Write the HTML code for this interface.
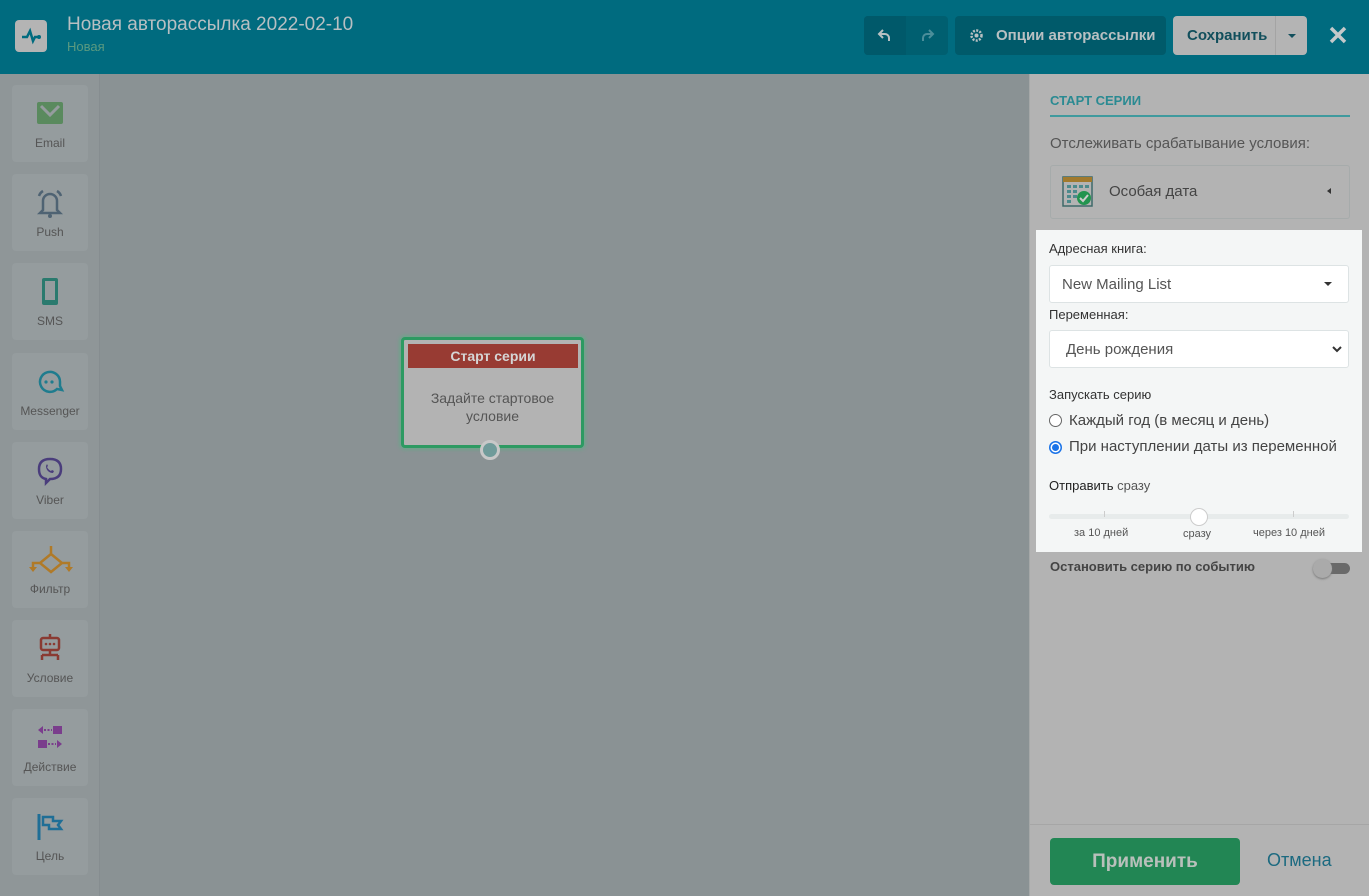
<!DOCTYPE html>
<html><head><meta charset="utf-8"><style>
*{box-sizing:border-box;margin:0;padding:0}
body{width:1369px;height:896px;overflow:hidden;font-family:"Liberation Sans",sans-serif;background:#8a9294;position:relative}
.hdr{position:absolute;left:0;top:0;width:1369px;height:74px;background:#006b7f}
.logo{position:absolute;left:15px;top:20px;width:32px;height:32px;background:#b4b4b4;border-radius:4px}
.title{position:absolute;left:67px;top:14px;font-size:19px;color:#b8bfc2}
.sub{position:absolute;left:67px;top:39px;font-size:13px;color:#5a9a80}
.btn{position:absolute;top:16px;height:39px;border-radius:4px}
.side{position:absolute;left:0;top:74px;width:100px;height:822px;background:#8f9698;border-right:1px solid #868d90}
.tile{position:absolute;left:12px;width:76px;height:77px;background:#959c9e;border-radius:4px;text-align:center;font-size:12px;color:#555}
.tile svg{position:absolute;left:23px;top:14px}
.tile span{position:absolute;left:0;right:0;top:51px}
.rp{position:absolute;left:1029px;top:74px;width:340px;height:822px;background:#b3b3b3;border-left:1px solid #a5a8a8}
.hl{position:absolute;left:1036px;top:230px;width:326px;height:322px;background:#f4f6f6}
.inp{position:absolute;left:13px;width:300px;height:38px;background:#fff;border:1px solid #dde3e4;border-radius:3px;font-size:15px;color:#555}
</style></head><body>
<div class="hdr">
<div class="logo"><svg width="32" height="32"><path d="M7 17h5l3-6 3 10 2-4h4" stroke="#006b7f" stroke-width="2.5" fill="none"/><circle cx="24" cy="17" r="2" fill="#006b7f"/></svg></div>
<div class="title">Новая авторассылка 2022-02-10</div>
<div class="sub">Новая</div>
<div class="btn" style="left:864px;width:84px;background:#005f70"><div style="position:absolute;left:0;top:0;width:42px;height:39px;background:#00596a;border-radius:4px 0 0 4px"></div>
<svg style="position:absolute;left:13px;top:11px" width="16" height="16"><path d="M6 3L2 7l4 4M2 7h6a4 4 0 0 1 4 4v3" stroke="#b8c0c2" stroke-width="2" fill="none"/></svg>
<svg style="position:absolute;left:55px;top:11px" width="16" height="16"><path d="M10 3l4 4-4 4M14 7H8a4 4 0 0 0-4 4v3" stroke="#4b8e9a" stroke-width="2" fill="none"/></svg></div>
<div class="btn" style="left:955px;width:211px;background:#005a6a;color:#b8c0c2;font-weight:bold;font-size:15px;line-height:39px;padding-left:41px">Опции авторассылки
<svg style="position:absolute;left:14px;top:12px" width="15" height="15"><circle cx="7.5" cy="7.5" r="5" stroke="#b8c0c2" stroke-width="2.5" fill="none" stroke-dasharray="2 1.3"/><circle cx="7.5" cy="7.5" r="2" fill="#b8c0c2"/></svg></div>
<div class="btn" style="left:1173px;width:134px;background:#b4b4b4;color:#124f5c;font-weight:bold;font-size:15px;line-height:39px;padding-left:14px">Сохранить
<div style="position:absolute;left:102px;top:0;width:1px;height:39px;background:#a4a4a4"></div>
<div style="position:absolute;left:115px;top:18px;border:4px solid transparent;border-top:4px solid #124f5c"></div></div>
<svg style="position:absolute;left:1328px;top:25px" width="20" height="20"><path d="M3 3l14 14M17 3L3 17" stroke="#c4c9ca" stroke-width="3.5"/></svg>
</div>
<div class="side">
<div class="tile" style="top:11px"><svg width="30" height="30"><rect x="2" y="3" width="26" height="22" rx="2" fill="#5a8a5e"/><path d="M6 7l9 9 9-9" stroke="#959c9e" stroke-width="3" fill="none"/></svg><span>Email</span></div>
<div class="tile" style="top:100px"><svg width="30" height="30"><path d="M8 22V13a7 7 0 0 1 14 0v9l3 3H5z" stroke="#4f6373" stroke-width="2.5" fill="none"/><circle cx="15" cy="28" r="2" fill="#4f6373"/><path d="M4 8a9 9 0 0 1 4-5M26 8a9 9 0 0 0-4-5" stroke="#4f6373" stroke-width="2.5" fill="none"/></svg><span>Push</span></div>
<div class="tile" style="top:189px"><svg width="30" height="30"><rect x="7" y="1" width="16" height="27" rx="2" fill="#2a7a6e"/><rect x="10" y="4" width="10" height="19" fill="#959c9e"/></svg><span>SMS</span></div>
<div class="tile" style="top:279px"><svg width="30" height="30"><path d="M22 22a10 10 0 1 1 3-7v4l2 4z" stroke="#1f7c8e" stroke-width="2.5" fill="none"/><circle cx="11" cy="15" r="1.6" fill="#1f7c8e"/><circle cx="17" cy="15" r="1.6" fill="#1f7c8e"/></svg><span>Messenger</span></div>
<div class="tile" style="top:368px"><svg width="30" height="30"><path d="M15 3c7 0 11 3 11 10s-4 10-11 10l-4 4v-4C6 22 4 19 4 13 4 6 8 3 15 3z" stroke="#4a3d7c" stroke-width="2.5" fill="none"/><path d="M11 10c0 4 3 7 7 7l1-2-2-1-1 1c-2-1-3-2-4-4l1-1-1-2z" fill="#4a3d7c"/></svg><span>Viber</span></div>
<div class="tile" style="top:457px"><svg width="30" height="30" style="left:16px;width:46px"><path d="M23 1v8L12 18l11 9 11-9-11-9M12 18H5v5M34 18h7v5" stroke="#b07a28" stroke-width="2.5" fill="none"/><path d="M1 22h8l-4 5zM37 22h8l-4 5z" fill="#b07a28"/></svg><span>Фильтр</span></div>
<div class="tile" style="top:546px"><svg width="30" height="30"><rect x="6" y="4" width="18" height="12" rx="2" stroke="#8a3a32" stroke-width="2.5" fill="none"/><path d="M15 0v4M15 16v5M7 21h16M7 21v5M23 21v5" stroke="#8a3a32" stroke-width="2.5"/><circle cx="11" cy="10" r="1.3" fill="#8a3a32"/><circle cx="15" cy="10" r="1.3" fill="#8a3a32"/><circle cx="19" cy="10" r="1.3" fill="#8a3a32"/></svg><span>Условие</span></div>
<div class="tile" style="top:635px"><svg width="30" height="30"><path d="M3 7l5-4v8zM27 21l-5-4v8z" fill="#7a3d8c"/><rect x="18" y="3" width="9" height="8" fill="#7a3d8c"/><rect x="3" y="17" width="9" height="8" fill="#7a3d8c"/><path d="M9 7h8M13 21h8" stroke="#7a3d8c" stroke-width="2" stroke-dasharray="2 1.5"/></svg><span>Действие</span></div>
<div class="tile" style="top:724px"><svg width="30" height="30"><path d="M4 2v26" stroke="#1f6e96" stroke-width="3"/><path d="M8 5h10v4h8l-3 4 3 4H14v-4H8z" stroke="#1f6e96" stroke-width="2.5" fill="none"/></svg><span>Цель</span></div>
</div>
<div style="position:absolute;left:401px;top:337px;width:183px;height:111px;border:3px solid #2d9a62;border-radius:4px;background:#b3b3b3;box-shadow:0 0 3px 2px #6fa38c">
<div style="position:absolute;left:4px;top:4px;width:170px;height:24px;background:#983b33;color:#d5d5d5;font-weight:bold;font-size:14px;text-align:center;line-height:24px">Старт серии</div>
<div style="position:absolute;left:0;right:0;top:49px;text-align:center;font-size:14px;color:#555;line-height:18px">Задайте стартовое<br>условие</div>
<div style="position:absolute;left:76px;top:100px;width:20px;height:20px;border-radius:50%;background:#709b9a;border:3px solid #c8c8c8"></div></div>
<div class="rp">
<div style="position:absolute;left:20px;top:19px;font-size:13px;font-weight:bold;color:#2a8a92">СТАРТ СЕРИИ</div>
<div style="position:absolute;left:20px;top:41px;width:300px;height:2px;background:#3f9a9e"></div>
<div style="position:absolute;left:20px;top:61px;font-size:15px;color:#555">Отслеживать срабатывание условия:</div>
<div style="position:absolute;left:20px;top:91px;width:300px;height:54px;border:1px solid #a6abab;border-radius:3px;background:#b3b3b3">
<svg style="position:absolute;left:11px;top:8px" width="32" height="34"><rect x="1" y="3" width="29" height="29" fill="none" stroke="#3e6a6a" stroke-width="1.5"/><rect x="1" y="3" width="29" height="5" fill="#a17a2d"/><g fill="#4c8a8c"><rect x="5" y="11" width="4" height="3"/><rect x="11" y="11" width="4" height="3"/><rect x="17" y="11" width="4" height="3"/><rect x="23" y="11" width="4" height="3"/><rect x="5" y="16" width="4" height="3"/><rect x="11" y="16" width="4" height="3"/><rect x="5" y="21" width="4" height="3"/><rect x="11" y="21" width="4" height="3"/><rect x="5" y="26" width="4" height="3"/></g><circle cx="22" cy="24" r="7" fill="#22944f"/><path d="M18 24l3 3 5-6" stroke="#ccc" stroke-width="2" fill="none"/></svg>
<div style="position:absolute;left:58px;top:17px;font-size:15px;color:#444">Особая дата</div>
<div style="position:absolute;left:276px;top:22px;border:3px solid transparent;border-right:4px solid #333;border-left:0"></div></div>
<div style="position:absolute;left:20px;top:485px;font-size:13px;font-weight:bold;color:#444">Остановить серию по событию</div>
<div style="position:absolute;left:292px;top:489px;width:28px;height:11px;border-radius:6px;background:#6a6a6a"></div>
<div style="position:absolute;left:283px;top:485px;width:19px;height:19px;border-radius:50%;background:#aaa;box-shadow:0 1px 2px #777"></div>
<div style="position:absolute;left:0;top:750px;width:340px;height:1px;background:#a6a6a6"></div>
<div style="position:absolute;left:20px;top:764px;width:190px;height:47px;border-radius:4px;background:#228654;color:#b9c0bb;font-weight:bold;font-size:19px;text-align:center;line-height:47px">Применить</div>
<div style="position:absolute;left:237px;top:776px;font-size:18px;color:#1c6a80">Отмена</div>
</div>
<div class="hl">
<div style="position:absolute;left:13px;top:11px;font-size:13px;color:#333">Адресная книга:</div>
<div class="inp" style="top:35px;padding:10px 12px">New Mailing List<div style="position:absolute;right:16px;top:16px;border:4px solid transparent;border-top:4px solid #333"></div></div>
<div style="position:absolute;left:13px;top:77px;font-size:13px;color:#333">Переменная:</div>
<div class="inp" style="top:100px;padding:10px 16px">День рождения<svg style="position:absolute;right:6px;top:14px" width="10" height="8"><path d="M1 2l4 4 4-4" stroke="#333" stroke-width="2" fill="none"/></svg></div>
<div style="position:absolute;left:13px;top:157px;font-size:13px;color:#333">Запускать серию</div>
<div style="position:absolute;left:13px;top:184px;width:13px;height:13px;border-radius:50%;border:1px solid #666;background:#fff"></div>
<div style="position:absolute;left:33px;top:182px;font-size:15px;color:#444">Каждый год (в месяц и день)</div>
<div style="position:absolute;left:13px;top:211px;width:13px;height:13px;border-radius:50%;background:#1a73e8"><div style="position:absolute;left:3px;top:3px;width:7px;height:7px;border-radius:50%;background:#1a73e8;box-shadow:0 0 0 1.5px #fff"></div></div>
<div style="position:absolute;left:33px;top:208px;font-size:15px;color:#444">При наступлении даты из переменной</div>
<div style="position:absolute;left:13px;top:248px;font-size:13px;color:#333"><b style="font-weight:normal;color:#222">Отправить</b> <span style="color:#555">сразу</span></div>
<div style="position:absolute;left:13px;top:284px;width:300px;height:5px;border-radius:3px;background:#e7ebeb"></div>
<div style="position:absolute;left:68px;top:281px;width:1px;height:6px;background:#ccc"></div>
<div style="position:absolute;left:257px;top:281px;width:1px;height:6px;background:#ccc"></div>
<div style="position:absolute;left:154px;top:278px;width:18px;height:18px;border-radius:50%;background:#fff;border:1px solid #ccc"></div>
<div style="position:absolute;left:38px;top:297px;font-size:11px;color:#555">за 10 дней</div>
<div style="position:absolute;left:147px;top:298px;font-size:11px;color:#555">сразу</div>
<div style="position:absolute;left:217px;top:297px;font-size:11px;color:#555">через 10 дней</div>
</div>
</body></html>
